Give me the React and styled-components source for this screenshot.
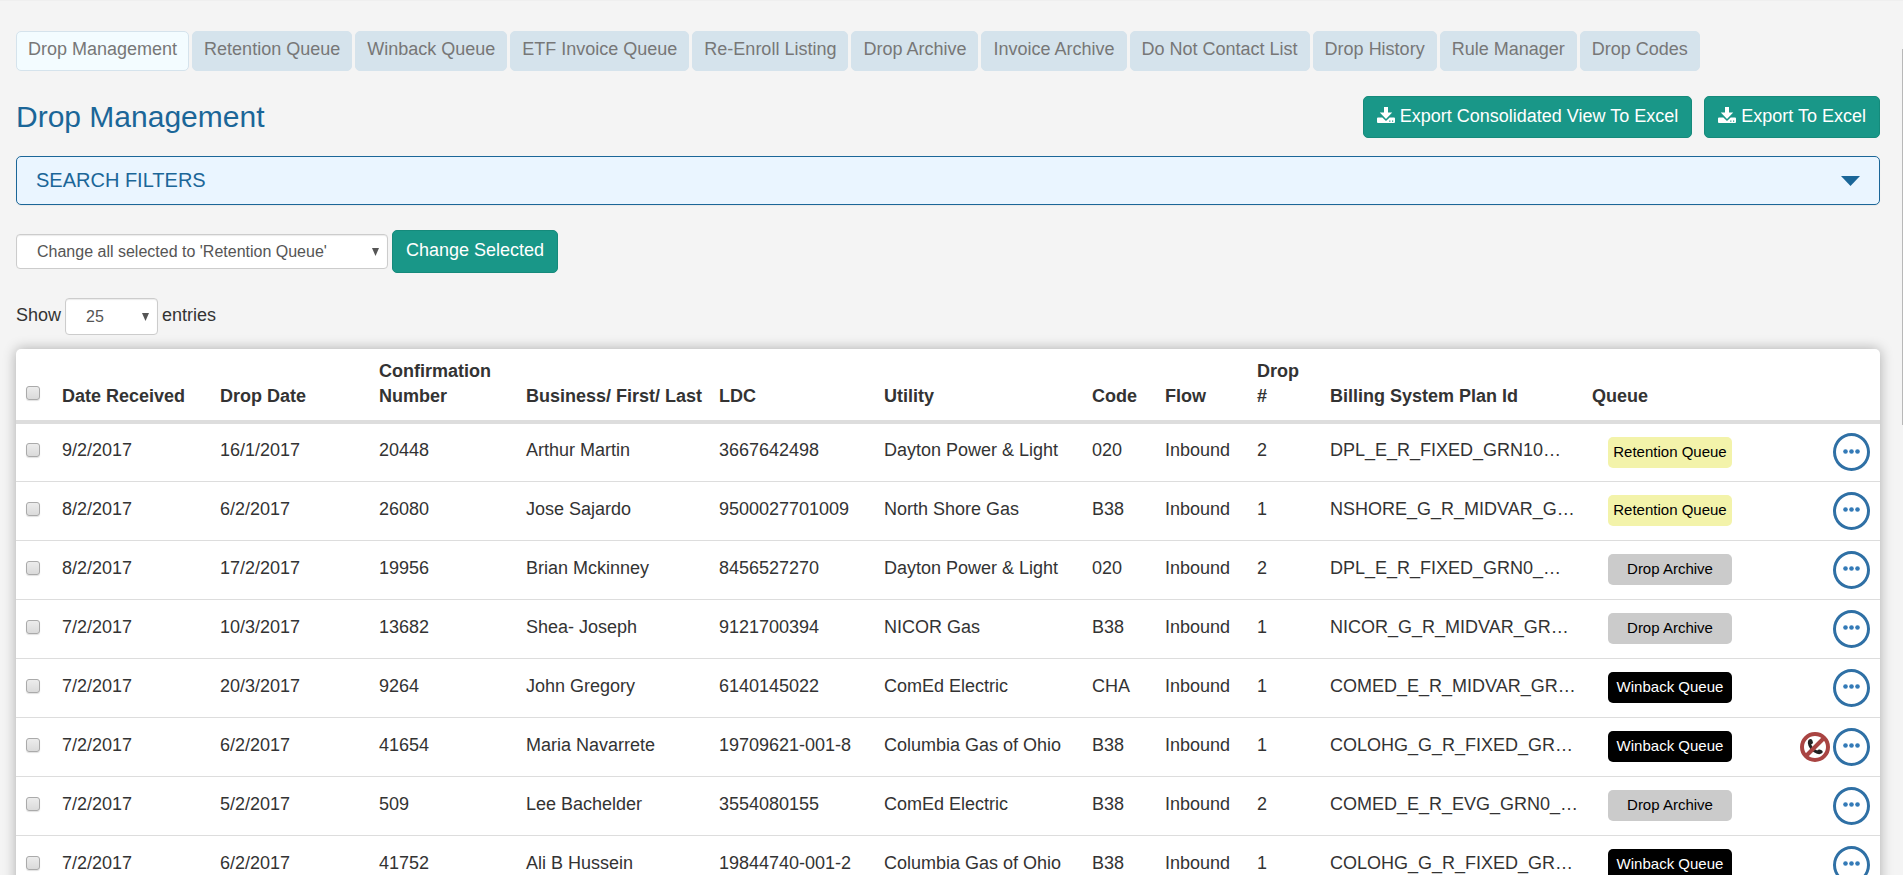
import React from 'react';
import styled, { createGlobalStyle } from 'styled-components';

const GlobalStyle = createGlobalStyle`
  * {
    box-sizing: border-box;
  }

  body {
    margin: 0;
    background: #f4f4f4;
    color: #333;
    font-family: "Liberation Sans", Arial, sans-serif;
    font-size: 18px;
    line-height: 25px;
    overflow: hidden;
  }
`;

const Page = styled.main`
  padding: 30px 23px 0 16px;
  border-top: 1px solid #efefef;
`;

const ScrollThumb = styled.div`
  position: fixed;
  top: 49px;
  right: 0;
  width: 1px;
  height: 43vh;
  background: #b8b8b8;
`;

const Tabs = styled.nav`
  display: flex;
  gap: 3px;
`;

const Tab = styled.a`
  height: 40px;
  padding: 5px 11px;
  border: 1px solid #d5e3ec;
  border-radius: 5px;
  background: ${({ $active }) => $active ? '#f3fcff' : '#d5e3ec'};
  color: #777;
  text-decoration: none;
  white-space: nowrap;
`;

const TitleBar = styled.header`
  display: flex;
  align-items: center;
  gap: 12px;
  margin: 25px 0 18px;
`;

const Title = styled.h1`
  flex: 1;
  margin: 0;
  color: #1b6698;
  font-size: 30px;
  font-weight: 400;
  line-height: 42px;
`;

const Button = styled.button`
  display: flex;
  align-items: center;
  gap: 5px;
  height: ${({ $tall }) => $tall ? '43px' : '42px'};
  padding: 0 13px 2px;
  border: 1px solid #158a7b;
  border-radius: 5px;
  background: #199788;
  color: #fff;
  font: inherit;
  white-space: nowrap;
`;

const Filters = styled.button`
  display: flex;
  align-items: center;
  justify-content: space-between;
  width: 100%;
  height: 49px;
  padding: 0 19px;
  border: 1px solid #1b6698;
  border-radius: 5px;
  background: #eaf5ff;
  box-shadow: 0 1px 1px rgba(0, 0, 0, 0.05);
  color: #1b6698;
  font: inherit;
  font-size: 20px;
`;

const Actions = styled.div`
  display: flex;
  align-items: center;
  gap: 4px;
  margin-top: 25px;
`;

const SelectWrap = styled.span`
  display: inline-flex;
  align-items: center;
  position: relative;
  width: ${({ $wide }) => $wide ? '372px' : '93px'};

  svg {
    position: absolute;
    right: 9px;
    pointer-events: none;
  }
`;

const Select = styled.select`
  appearance: none;
  width: 100%;
  height: ${({ $tall }) => $tall ? '37px' : '35px'};
  padding: 0 20px;
  border: 1px solid #ccc;
  border-radius: 4px;
  background: #fff;
  box-shadow: inset 0 1px 1px rgba(0, 0, 0, 0.08);
  color: #555;
  font: inherit;
  font-size: 16px;
`;

const Length = styled.div`
  display: flex;
  align-items: center;
  gap: 4px;
  margin: 25px 0 14px;

  label {
    padding-bottom: 2px;
  }
`;

const Panel = styled.section`
  border-radius: 5px;
  background: #fff;
  box-shadow: 0 0 13px rgba(0, 0, 0, 0.3);
`;

const Table = styled.table`
  width: 100%;
  border-collapse: collapse;
  table-layout: fixed;

  th, td {
    padding: 0 0 0 10px;
    text-align: left;
    white-space: nowrap;
  }

  th {
    height: 73px;
    padding-bottom: 11px;
    border-bottom: 4px solid #ddd;
    vertical-align: bottom;
  }

  td {
    height: 59px;
    border-bottom: 1px solid #ddd;
  }

  /* text columns sit a touch above the badge and the buttons */
  td:nth-child(-n + 11) {
    padding-bottom: 3px;
  }
`;

const Check = styled.input`
  appearance: none;
  display: block;
  width: 14px;
  height: 14px;
  margin: ${({ $head }) => $head ? '0 0 9px' : '0 0 1px'};
  border: 1px solid #aaa;
  border-radius: 3px;
  background: linear-gradient(#ececec, #dadada);
  box-shadow: 0 1px 1px rgba(0, 0, 0, 0.12);
`;

const badgeColors = {
  'Retention Queue': '#f3f3aa',
  'Drop Archive': '#cbcbcb',
  'Winback Queue': '#000',
};

const Badge = styled.span`
  display: block;
  width: 124px;
  height: 31px;
  margin-left: 16px;
  border-radius: 5px;
  background: ${({ $queue }) => badgeColors[$queue]};
  color: ${({ $queue }) => $queue === 'Winback Queue' ? '#fff' : '#000'};
  font-size: 15px;
  line-height: 30px;
  text-align: center;
`;

const RowActions = styled.div`
  display: flex;
  align-items: center;
  justify-content: flex-end;
  gap: 3px;
  padding-right: 10px;
`;

const MoreButton = styled.button`
  display: flex;
  align-items: center;
  justify-content: center;
  width: 37px;
  height: 38px;
  padding: 0 0 2px;
  border: 3px solid #2f70a5;
  border-radius: 50%;
  background: #fff;
`;

const tabs = [
  'Drop Management', 'Retention Queue', 'Winback Queue', 'ETF Invoice Queue',
  'Re-Enroll Listing', 'Drop Archive', 'Invoice Archive', 'Do Not Contact List',
  'Drop History', 'Rule Manager', 'Drop Codes',
];

// share of the table width, in the order of the columns
const widths = [36, 158, 159, 147, 193, 165, 208, 73, 92, 73, 262, 170, 128];
const total = widths.reduce((sum, w) => sum + w, 0);

const rows = [
  ['9/2/2017', '16/1/2017', '20448', 'Arthur Martin', '3667642498', 'Dayton Power & Light', '020', 'Inbound', '2', 'DPL_E_R_FIXED_GRN10…', 'Retention Queue'],
  ['8/2/2017', '6/2/2017', '26080', 'Jose Sajardo', '9500027701009', 'North Shore Gas', 'B38', 'Inbound', '1', 'NSHORE_G_R_MIDVAR_G…', 'Retention Queue'],
  ['8/2/2017', '17/2/2017', '19956', 'Brian Mckinney', '8456527270', 'Dayton Power & Light', '020', 'Inbound', '2', 'DPL_E_R_FIXED_GRN0_…', 'Drop Archive'],
  ['7/2/2017', '10/3/2017', '13682', 'Shea- Joseph', '9121700394', 'NICOR Gas', 'B38', 'Inbound', '1', 'NICOR_G_R_MIDVAR_GR…', 'Drop Archive'],
  ['7/2/2017', '20/3/2017', '9264', 'John Gregory', '6140145022', 'ComEd Electric', 'CHA', 'Inbound', '1', 'COMED_E_R_MIDVAR_GR…', 'Winback Queue'],
  ['7/2/2017', '6/2/2017', '41654', 'Maria Navarrete', '19709621-001-8', 'Columbia Gas of Ohio', 'B38', 'Inbound', '1', 'COLOHG_G_R_FIXED_GR…', 'Winback Queue', true],
  ['7/2/2017', '5/2/2017', '509', 'Lee Bachelder', '3554080155', 'ComEd Electric', 'B38', 'Inbound', '2', 'COMED_E_R_EVG_GRN0_…', 'Drop Archive'],
  ['7/2/2017', '6/2/2017', '41752', 'Ali B Hussein', '19844740-001-2', 'Columbia Gas of Ohio', 'B38', 'Inbound', '1', 'COLOHG_G_R_FIXED_GR…', 'Winback Queue'],
];

const DownloadIcon = () => (
  <svg width="18" height="18" viewBox="0 0 18 18" aria-hidden="true">
    <path fill="#fff" d="M7 0h4v5.500h4.200L9 12 2.800 5.500H7z" />
    <path fill="#fff" d="M1 10.500h4.300L9 14l3.700-3.500H17q1 0 1 1V15q0 1-1 1H1q-1 0-1-1v-3.500q0-1 1-1z" />
    <path fill="#199788" d="M12.200 13.500h1.200v1.200h-1.200zM15 13.500h1.200v1.200H15z" />
  </svg>
);

const Arrow = () => (
  <svg width="7" height="8" viewBox="0 0 7 8" aria-hidden="true">
    <path fill="#555" d="M0 0h7L3.500 8z" />
  </svg>
);

const Caret = () => (
  <svg width="19" height="10" viewBox="0 0 19 10" aria-hidden="true">
    <path fill="#1b6698" d="M0 0h19L9.500 10z" />
  </svg>
);

const NoCall = () => (
  <svg width="30" height="30" viewBox="0 0 30 30" role="img" aria-label="Do not contact">
    <path fill="#222" d="M9 7.500q2-1.200 3.200.5l.8 2.500q-.2 1.400-1.800 1.800 1 3.800 6 6.200 1.200-1.500 2.600-1l2.300 1q1.200 1.200.2 2.600-2.400 1.700-5.300.6-8.300-3.300-9.200-10.800 0-2.400 1.200-3.400z" />
    <circle cx="15" cy="15" r="13" fill="none" stroke="#a94442" strokeWidth="4" />
    <path stroke="#a94442" strokeWidth="4" d="M24 6L6 24" />
  </svg>
);

const App = () => {
  return (
    <>
      <GlobalStyle />
      <Page>
        <Tabs>
          {tabs.map((tab, i) => <Tab key={tab} href="#" $active={i === 0}>{tab}</Tab>)}
        </Tabs>
        <TitleBar>
          <Title>Drop Management</Title>
          <Button><DownloadIcon />Export Consolidated View To Excel</Button>
          <Button><DownloadIcon />Export To Excel</Button>
        </TitleBar>
        <Filters>SEARCH FILTERS<Caret /></Filters>
        <Actions>
          <SelectWrap $wide>
            <Select aria-label="Bulk change">
              <option>Change all selected to 'Retention Queue'</option>
            </Select>
            <Arrow />
          </SelectWrap>
          <Button $tall>Change Selected</Button>
        </Actions>
        <Length>
          <label htmlFor="length">Show</label>
          <SelectWrap>
            <Select id="length" $tall>
              <option>25</option>
            </Select>
            <Arrow />
          </SelectWrap>
          <label htmlFor="length">entries</label>
        </Length>
        <Panel>
          <Table>
            <colgroup>
              {widths.map((w, i) => <col key={i} style={{ width: `${w / total * 100}%` }} />)}
            </colgroup>
            <thead>
              <tr>
                <th><Check type="checkbox" aria-label="Select all" $head /></th>
                <th>Date Received</th>
                <th>Drop Date</th>
                <th>Confirmation<br />Number</th>
                <th>Business/ First/ Last</th>
                <th>LDC</th>
                <th>Utility</th>
                <th>Code</th>
                <th>Flow</th>
                <th>Drop<br />#</th>
                <th>Billing System Plan Id</th>
                <th>Queue</th>
                <th aria-label="Actions" />
              </tr>
            </thead>
            <tbody>
              {rows.map((row) => (
                <tr key={row[2]}>
                  <td><Check type="checkbox" aria-label={`Select ${row[3]}`} /></td>
                  {row.slice(0, 10).map((cell, i) => <td key={i}>{cell}</td>)}
                  <td><Badge $queue={row[10]}>{row[10]}</Badge></td>
                  <td>
                    <RowActions>
                      {row[11] && <NoCall />}
                      <MoreButton aria-label="More actions">
                        <svg width="17" height="5" viewBox="0 0 17 5">
                          <g fill="#337ab7">
                            <circle cx="2.500" cy="2.500" r="2.300" />
                            <circle cx="8.500" cy="2.500" r="2.300" />
                            <circle cx="14.500" cy="2.500" r="2.300" />
                          </g>
                        </svg>
                      </MoreButton>
                    </RowActions>
                  </td>
                </tr>
              ))}
            </tbody>
          </Table>
        </Panel>
      </Page>
      <ScrollThumb />
    </>
  )
}

export default App
